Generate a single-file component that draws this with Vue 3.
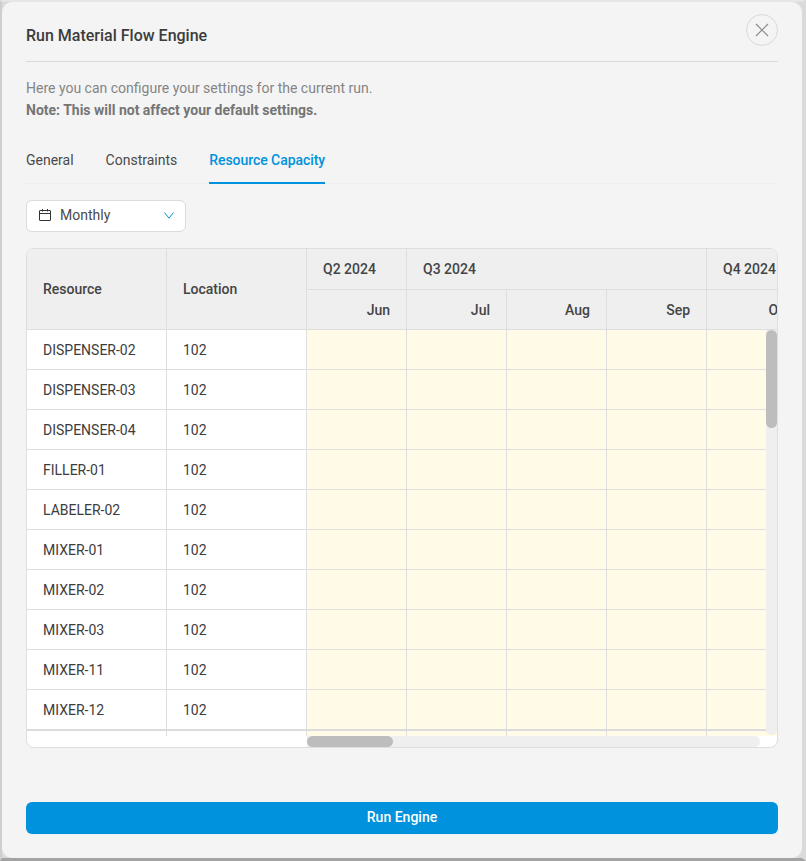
<template>
  <div class="backdrop">
    <span class="back-mark"></span>
    <span class="back-line"></span>
    <span class="back-corner"></span>
    <div class="modal">
      <div class="modal-header">
        <h2>Run Material Flow Engine</h2>
        <button class="close-btn">
          <svg width="14" height="14" viewBox="0 0 14 14">
            <path d="M1 1L13 13M13 1L1 13" stroke="#8c8c8c" stroke-width="1.2" fill="none" />
          </svg>
        </button>
      </div>

      <p class="intro">Here you can configure your settings for the current run.</p>
      <p class="note">Note: This will not affect your default settings.</p>

      <div class="tabs">
        <div v-for="tab in tabs" :key="tab" class="tab" :class="{ active: tab === 'Resource Capacity' }">{{ tab }}</div>
      </div>

      <div class="period-select">
        <svg class="cal" width="14" height="14" viewBox="0 0 14 14" fill="none" stroke="#333" stroke-width="1">
          <rect x="1.5" y="2.5" width="11" height="10" rx="0.5" />
          <path d="M1.5 5.5H12.5M4.5 1V3.5M9.5 1V3.5" />
        </svg>
        <span>Monthly</span>
        <svg class="chev" width="10" height="7" viewBox="0 0 10 7" fill="none" stroke="#0092dc" stroke-width="1">
          <path d="M0.5 0.5L5 6.2L9.5 0.5" />
        </svg>
      </div>

      <div class="grid-wrap">
        <div class="grid">
          <div class="th span-rows">Resource</div>
          <div class="th span-rows">Location</div>
          <div class="th">Q2 2024</div>
          <div class="th span-3">Q3 2024</div>
          <div class="th span-3">Q4 2024</div>
          <div v-for="m in months" :key="m" class="th month">{{ m }}</div>

          <template v-for="(r, i) in rows" :key="r">
            <div class="td" :class="{ last: i === 9 }">{{ i < 10 ? r : '' }}</div>
            <div class="td" :class="{ last: i === 9 }">{{ i < 10 ? '102' : '' }}</div>
            <div v-for="m in months" :key="m" class="td cell" :class="{ last: i === 9 }"></div>
          </template>
        </div>

        <div class="v-track"><div class="v-thumb"></div></div>
        <div class="h-track"><div class="h-thumb"></div></div>
      </div>

      <button class="run-btn">Run Engine</button>
    </div>
  </div>
</template>

<script setup>
const tabs = ['General', 'Constraints', 'Resource Capacity']
const months = ['Jun', 'Jul', 'Aug', 'Sep', 'Oct', 'Nov', 'Dec']
const rows = [
  'DISPENSER-02',
  'DISPENSER-03',
  'DISPENSER-04',
  'FILLER-01',
  'LABELER-02',
  'MIXER-01',
  'MIXER-02',
  'MIXER-03',
  'MIXER-11',
  'MIXER-12',
  'MIXER-13'
]
</script>

<style>
body {
  margin: 0;
  background: #d0d0d0;
}
</style>

<style scoped>
.backdrop {
  position: relative;
  width: 806px;
  height: 861px;
  overflow: hidden;
  box-sizing: border-box;
  border-top: 2px solid #e6e6e6;
  border-left: 2px solid #cecece;
  border-right: 4px solid #dadada;
  border-bottom: 3px solid #a3a3a3;
  background: #dadada;
  font-family: Roboto, sans-serif;
}

.back-mark {
  position: absolute;
  left: -2px;
  top: 18px;
  width: 2px;
  height: 4px;
  background: #444;
}

.back-line {
  position: absolute;
  left: -2px;
  top: 35px;
  width: 2px;
  height: 1px;
  background: #b5b5b5;
}

.back-corner {
  position: absolute;
  right: -4px;
  bottom: -3px;
  width: 61px;
  height: 3px;
  background: #cfcfcf;
}

.modal {
  position: relative;
  box-sizing: border-box;
  height: 856px;
  padding: 12px 24px 24px;
  background: #f4f4f4;
  border-radius: 10px;
  display: flex;
  flex-direction: column;
}

.modal-header {
  display: flex;
  justify-content: space-between;
  align-items: center;
  height: 47px;
  border-bottom: 1px solid #d9d9d9;
}

.modal-header h2 {
  margin: 0 0 4px;
  font-size: 16px;
  font-weight: 500;
  color: #3c3c3c;
}

.close-btn {
  width: 32px;
  height: 32px;
  padding: 0;
  margin-bottom: 15px;
  background: none;
  border: 1px solid #d9d9d9;
  border-radius: 50%;
  display: flex;
  align-items: center;
  justify-content: center;
}

.intro,
.note {
  margin: 0;
  font-size: 14px;
  line-height: 22px;
  color: #858585;
}

.intro {
  margin-top: 15px;
}

.note {
  font-weight: 700;
  color: #757575;
}

.tabs {
  display: flex;
  gap: 32px;
  margin-top: 18px;
  border-bottom: 1px solid #eeeeee;
}

.tab {
  height: 44px;
  box-sizing: border-box;
  padding-top: 11px;
  font-size: 14px;
  line-height: 20px;
  color: #4a4a4a;
}

.tab.active {
  height: 45px;
  color: #0092dc;
  font-weight: 500;
  letter-spacing: -0.06px;
  border-bottom: 2px solid #0092dc;
  margin-bottom: -1px;
}

.period-select {
  display: flex;
  align-items: center;
  width: 160px;
  height: 32px;
  box-sizing: border-box;
  margin-top: 16px;
  padding: 0 11px 2px 11px;
  background: #fff;
  border: 1px solid #dcdcdc;
  border-radius: 6px;
  font-size: 14px;
  color: #4a4a4a;
}

.period-select span {
  margin-left: 8px;
  flex: 1;
}

.grid-wrap {
  position: relative;
  margin-top: 16px;
  height: 500px;
  box-sizing: border-box;
  background: #fff;
  border: 1px solid #dedede;
  border-radius: 8px;
  overflow: hidden;
}

.grid {
  display: grid;
  grid-template-columns: 140px 140px repeat(7, 100px);
  grid-template-rows: 41px 40px repeat(11, 40px);
  height: 487px;
  overflow: hidden;
  font-size: 14px;
  color: #3c3c3c;
}

.th {
  box-sizing: border-box;
  display: flex;
  align-items: center;
  padding: 0 16px;
  background: #efefef;
  border-right: 1px solid #dedede;
  border-bottom: 1px solid #dedede;
  font-weight: 500;
  color: #444;
  white-space: nowrap;
}

.span-rows {
  grid-row: span 2;
}

.span-3 {
  grid-column: span 3;
}

.month {
  justify-content: flex-end;
}

.td {
  box-sizing: border-box;
  display: flex;
  align-items: center;
  padding: 1px 16px 0;
  background: #fff;
  border-right: 1px solid #dedede;
  border-bottom: 1px solid #dedede;
  white-space: nowrap;
}

.td.last {
  position: relative;
  z-index: 1;
  box-shadow: 0 1px 0 #dadada;
}

.cell {
  background: #fffbe6;
}

.v-track {
  position: absolute;
  z-index: 2;
  top: 81px;
  right: 0;
  bottom: 12px;
  width: 11px;
  background: #efefef;
  border-radius: 0 0 6px 6px;
}

.v-thumb {
  width: 11px;
  height: 98px;
  background: #bdbdbd;
  border-radius: 6px;
}

.h-track {
  position: absolute;
  z-index: 2;
  left: 280px;
  right: 17px;
  bottom: 0;
  height: 11px;
  background: #efefef;
  border-radius: 0 6px 6px 0;
}

.h-thumb {
  width: 86px;
  height: 11px;
  background: #bdbdbd;
  border-radius: 6px;
}

.run-btn {
  margin-top: auto;
  height: 32px;
  padding: 0 0 2px;
  border: none;
  border-radius: 6px;
  background: #0092dc;
  box-shadow: 0 1px 0 #e3f1f9;
  color: #fff;
  font-family: Roboto, sans-serif;
  font-size: 14px;
  font-weight: 500;
}
</style>
